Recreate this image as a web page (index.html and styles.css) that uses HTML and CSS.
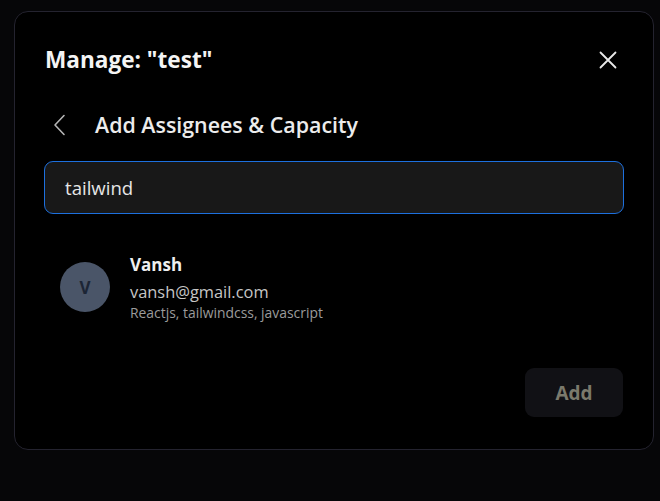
FILE: index.html
```html
<!DOCTYPE html>
<html lang="en">
<head>
<meta charset="utf-8">
<title>Manage</title>
<link rel="stylesheet" href="styles.css">
</head>
<body>
<div class="modal">
  <div class="modal-header">
    <h2 class="modal-title">Manage: "test"</h2>
    <button class="close-btn" aria-label="Close">
      <svg width="18" height="18" viewBox="0 0 18 18"><path d="M1.5 1.5 L16.5 16.5 M16.5 1.5 L1.5 16.5" stroke="#e8e8e8" stroke-width="1.8" stroke-linecap="round"/></svg>
    </button>
  </div>
  <div class="sub-header">
    <button class="back-btn" aria-label="Back">
      <svg width="14" height="22" viewBox="0 0 14 22"><path d="M11 1.5 L2 11 L11 20.5" fill="none" stroke="#b5b5b5" stroke-width="1.6" stroke-linecap="round" stroke-linejoin="round"/></svg>
    </button>
    <h3 class="sub-title">Add Assignees &amp; Capacity</h3>
  </div>
  <div class="search-box">tailwind</div>
  <div class="person">
    <div class="avatar">V</div>
    <div class="person-info">
      <div class="person-name">Vansh</div>
      <div class="person-email">vansh@gmail.com</div>
      <div class="person-skills">Reactjs, tailwindcss, javascript</div>
    </div>
  </div>
  <div class="actions">
    <button class="add-btn">Add</button>
  </div>
</div>
</body>
</html>
```

FILE: styles.css
```css
html, body {
  margin: 0;
  padding: 0;
  background: #060608;
}
body {
  padding: 11px 0 0 14px;
  font-family: "Open Sans", "Noto Sans", sans-serif;
}
.modal {
  width: 580px;
  height: 404px;
  background: #000;
  border: 1px solid #24232f;
  border-radius: 14px;
  padding: 33px 29px 0 29px;
  display: flex;
  flex-direction: column;
}
.modal-header {
  display: flex;
  align-items: center;
  justify-content: space-between;
  height: 30px;
}
.modal-title {
  margin: 0;
  padding-left: 1px;
  font-size: 22.6px;
  font-weight: 700;
  color: #f4f4f4;
  line-height: 30px;
}
.close-btn {
  background: none;
  border: 0;
  padding: 0;
  margin-right: 7px;
  width: 18px;
  height: 18px;
  display: flex;
}
.sub-header {
  display: flex;
  align-items: center;
  height: 30px;
  margin-top: 35px;
}
.back-btn {
  background: none;
  border: 0;
  padding: 0;
  margin-left: 9px;
  width: 14px;
  height: 22px;
  display: flex;
}
.sub-title {
  margin: 0 0 0 28px;
  font-size: 21.4px;
  font-weight: 600;
  color: #ececec;
  line-height: 30px;
}
.search-box {
  margin-top: 21px;
  box-sizing: border-box;
  height: 53px;
  border: 1.5px solid #1d70de;
  border-radius: 9px;
  background: #181818;
  padding: 0 20px;
  display: flex;
  align-items: center;
  font-size: 18.6px;
  color: #e6e6e6;
}
.person {
  display: flex;
  align-items: center;
  margin-top: 40px;
  padding-left: 16px;
  gap: 20px;
}
.avatar {
  width: 50px;
  height: 50px;
  border-radius: 50%;
  background: #4a5568;
  color: #1c2535;
  font-weight: 700;
  font-size: 17px;
  display: flex;
  align-items: center;
  justify-content: center;
  margin-top: -2px;
}
.person-info {
  display: flex;
  flex-direction: column;
}
.person-name {
  font-size: 17px;
  font-weight: 700;
  color: #efefef;
  line-height: 22px;
}
.person-email {
  font-size: 16.4px;
  color: #c6c6c6;
  line-height: 22px;
  margin-top: 5px;
}
.person-skills {
  font-size: 13.9px;
  color: #9b9b9b;
  line-height: 19px;
}
.actions {
  display: flex;
  justify-content: flex-end;
  margin-top: 46px;
}
.add-btn {
  width: 98px;
  height: 49px;
  margin-right: 1px;
  border: 0;
  border-radius: 9px;
  background: #111115;
  color: #7b7a6c;
  font-family: "Open Sans", "Noto Sans", sans-serif;
  font-size: 19px;
  font-weight: 700;
}
```
